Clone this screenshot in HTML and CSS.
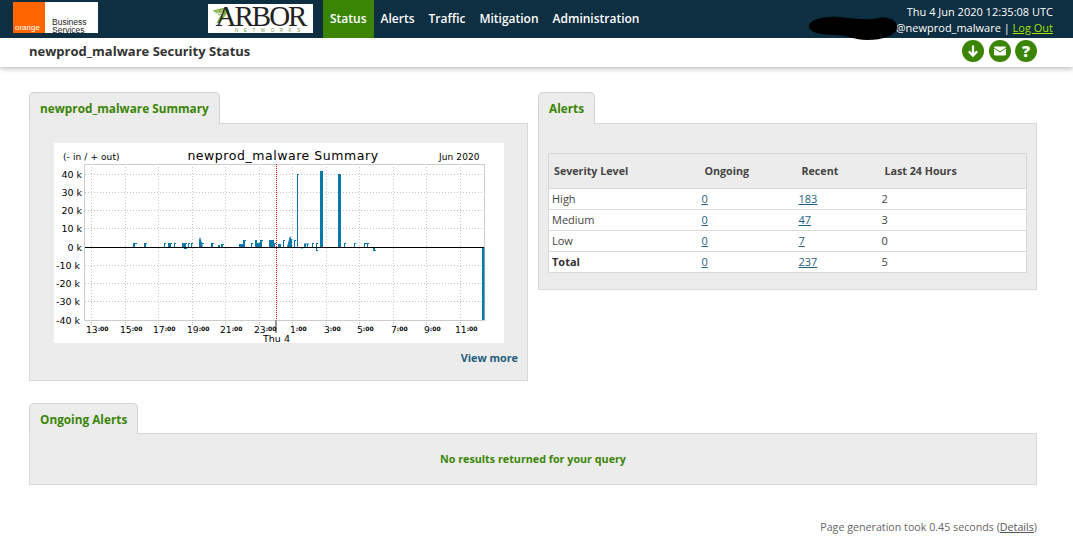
FILE: index.html
```html
<!DOCTYPE html>
<html lang="en">
<head>
<meta charset="utf-8">
<title>newprod_malware Security Status</title>
<link rel="stylesheet" href="styles.css">
</head>
<body>
<header class="topbar">
  <div class="logo-orange">
    <div class="orange-square"><span>orange</span></div>
    <div class="orange-text"><span>Business</span><span>Services</span></div>
  </div>
  <div class="logo-arbor">
    <svg class="arbor-leaf" viewBox="0 0 20 20" aria-hidden="true"><path d="M1 4 L12 1 L19 3 L9 18 L5 18 L9 10 Z" fill="#7fae45"/><path d="M3 7h9M6 4l4 6M11 3l1 7" stroke="#e8f0dc" stroke-width="1" fill="none"/></svg>
    <span class="arbor-word">ARBOR</span>
    <span class="arbor-sub">NETWORKS</span>
  </div>
  <nav class="mainnav">
    <a class="navitem active">Status</a>
    <a class="navitem">Alerts</a>
    <a class="navitem">Traffic</a>
    <a class="navitem">Mitigation</a>
    <a class="navitem">Administration</a>
  </nav>
  <div class="userinfo">
    <div>Thu 4 Jun 2020 12:35:08 UTC</div>
    <div>@newprod_malware | <a class="logout">Log Out</a></div>
    <svg class="redact" viewBox="0 0 90 26" aria-hidden="true"><path d="M0 10C3 4 15 1 30 2C45 3 55 6 70 3C80 1 90 6 88 14C86 20 75 25 58 25C45 25 40 20 25 20C10 20-3 16 0 10Z"/></svg>
  </div>
</header>
<div class="subbar">
  <h1 class="pagetitle">newprod_malware Security Status</h1>
  <div class="actions">
    <span class="action"><svg viewBox="0 0 22 22" aria-hidden="true"><path d="M11 5.500v10M6.800 11.400l4.200 4.200 4.200-4.200" fill="none" stroke="#fff" stroke-width="2.200"/></svg></span>
    <span class="action"><svg viewBox="0 0 22 22" aria-hidden="true"><rect x="5" y="6.500" width="12" height="9" rx="1" fill="#fff"/><path d="M5 8l6 4 6-4" fill="none" stroke="#3b8505" stroke-width="1"/></svg></span>
    <span class="action help">?</span>
  </div>
</div>
<main class="content">
  <div class="columns">
    <section class="panel">
      <h2 class="tab">newprod_malware Summary</h2>
      <div class="panelbody chartbody">
        <svg class="chart" viewBox="54 143 450 200" role="img" aria-label="Traffic summary chart">
          <rect x="54" y="143" width="450" height="200" fill="#fff"/>
          <g class="grid">
            <path d="M85 174.500H484M85 192.500H484M85 210.500H484M85 228.500H484M85 265.500H484M85 283.500H484M85 301.500H484"/>
            <path d="M91.500 164V320M125.500 164V320M158.500 164V320M192.500 164V320M225.500 164V320M259.500 164V320M292.500 164V320M326.500 164V320M359.500 164V320M393.500 164V320M426.500 164V320M460.500 164V320"/>
          </g>
          <path class="frame" d="M84.500 320.500V164.500H484.500V320.500H84.500"/>
          <path class="ticks" d="M91.500 320v5M125.500 320v5M158.500 320v5M192.500 320v5M225.500 320v5M259.500 320v5M292.500 320v5M326.500 320v5M359.500 320v5M393.500 320v5M426.500 320v5M460.500 320v5"/>
          <g class="bars">
            <path d="M133 247v-4h4v1h-2v3zM144 247v-4h3v1h-1v3zM164 247v-4h2v1h-1v3zM168 247v-4h4v1h-1v3zM174 247v-4h2v1h-1v3z"/>
            <path d="M182 247v-4h5v1h-1v3zM184 247h3v2h-3zM188 247v-4h2v1h-1v3zM191 247v-4h2v1h-1v3z"/>
            <path d="M199 247v-7l1-3 1 3 1 3h2v1h-1.500v3z"/>
            <path d="M211 247v-4h3v1h-1v3zM218 247v-2h2v2zM221 247v-3h3v1h-1v2z"/>
            <path d="M239 247v-3h4v-4h3v1h-1v6zM251 247v-4h2v1h-1v3z"/>
            <path d="M255 247v-7h2v3h3v-3h3v1h-1v6zM269 247v-7h5v3h2v1h-1v3z"/>
            <path d="M278 247v-3h3v3zM283 247v-7h2v1h-1v6zM287 247l1-4 2-7 2 4v7zM294 247v-7h2v1h-1v6z"/>
            <path d="M297 247V174h2v1h-1v72zM301 247h2v1.500h-2z"/>
            <path d="M304 247v-3.500h5v1h-1v2.500h-1v-2.500h-1v2.500zM312 247v-4h2v1h-1v3zM316 243h2v1h-1v6h1v1h-2z"/>
            <path d="M320 247V171h3v76zM338 247V174h3v73z"/>
            <path d="M344 247v-4h2v1h-1v3zM354 247v-4h2v1h-1v3zM364 247v-4h5v1h-1v3h-1v-3h-2v3zM373 247h2v3h1v1h-3z"/>
            <path d="M482 247h2.500v73h-2.500z"/>
          </g>
          <path class="zero" d="M85 247.500H484"/>
          <path class="marker" d="M276.500 164V320"/>
          <rect class="markertick" x="275" y="320" width="2" height="13"/>
          <text class="c-small" x="63" y="160">(- in / + out)</text>
          <text class="c-title" x="283" y="160" text-anchor="middle">newprod_malware Summary</text>
          <text class="c-small" x="439" y="160">Jun 2020</text>
          <g class="c-y" text-anchor="end">
            <text x="82" y="178">40 k</text>
            <text x="82" y="196">30 k</text>
            <text x="82" y="214">20 k</text>
            <text x="82" y="232">10 k</text>
            <text x="82" y="251">0 k</text>
            <text x="80" y="269">-10 k</text>
            <text x="80" y="287">-20 k</text>
            <text x="80" y="305">-30 k</text>
            <text x="80" y="324">-40 k</text>
          </g>
          <g class="c-x">
            <text x="86" y="333">13<tspan class="c-min" dy="-2">:00</tspan></text>
            <text x="120" y="333">15<tspan class="c-min" dy="-2">:00</tspan></text>
            <text x="153" y="333">17<tspan class="c-min" dy="-2">:00</tspan></text>
            <text x="187" y="333">19<tspan class="c-min" dy="-2">:00</tspan></text>
            <text x="220" y="333">21<tspan class="c-min" dy="-2">:00</tspan></text>
            <text x="254" y="333">23<tspan class="c-min" dy="-2">:00</tspan></text>
            <text x="290" y="333">1<tspan class="c-min" dy="-2">:00</tspan></text>
            <text x="324" y="333">3<tspan class="c-min" dy="-2">:00</tspan></text>
            <text x="357" y="333">5<tspan class="c-min" dy="-2">:00</tspan></text>
            <text x="391" y="333">7<tspan class="c-min" dy="-2">:00</tspan></text>
            <text x="424" y="333">9<tspan class="c-min" dy="-2">:00</tspan></text>
            <text x="455" y="333">11<tspan class="c-min" dy="-2">:00</tspan></text>
          </g>
          <text class="c-day" x="276.500" y="342" text-anchor="middle">Thu 4</text>
        </svg>
        <a class="viewmore">View more</a>
      </div>
    </section>
    <section class="panel">
      <h2 class="tab">Alerts</h2>
      <div class="panelbody alertsbody">
        <table class="alerts">
          <thead>
            <tr><th class="c1">Severity Level</th><th class="c2">Ongoing</th><th class="c3">Recent</th><th class="c4">Last 24 Hours</th></tr>
          </thead>
          <tbody>
            <tr><td>High</td><td><a>0</a></td><td><a>183</a></td><td>2</td></tr>
            <tr><td>Medium</td><td><a>0</a></td><td><a>47</a></td><td>3</td></tr>
            <tr><td>Low</td><td><a>0</a></td><td><a>7</a></td><td>0</td></tr>
            <tr><td class="total">Total</td><td><a>0</a></td><td><a>237</a></td><td>5</td></tr>
          </tbody>
        </table>
      </div>
    </section>
  </div>
  <section class="panel ongoing">
    <h2 class="tab">Ongoing Alerts</h2>
    <div class="panelbody noresults">No results returned for your query</div>
  </section>
  <footer class="pagefoot">Page generation took 0.45 seconds (<a>Details</a>)</footer>
</main>
</body>
</html>
```
FILE: styles.css
```css
* { box-sizing: border-box; }
html, body { margin: 0; padding: 0; }
body {
  font-family: "Open Sans", "Liberation Sans", sans-serif;
  font-size: 11px;
  color: #333;
  background: #fff;
  height: 538px;
  overflow: hidden;
}
a { color: #1f6280; text-decoration: underline; }

.topbar {
  display: flex;
  height: 38px;
  background: #0e2e42;
  color: #fff;
  padding-left: 13px;
  position: relative;
  z-index: 2;
}
.logo-orange {
  display: flex;
  width: 85px;
  height: 31px;
  margin-top: 2px;
  background: #fff;
  overflow: hidden;
}
.orange-square {
  width: 32px;
  background: #ff6600;
  display: flex;
  align-items: flex-end;
  padding: 0 0 1px 2px;
}
.orange-square span { font-size: 8px; line-height: 9px; color: #fff; font-family: "Liberation Sans", sans-serif; }
.orange-text {
  display: flex;
  flex-direction: column;
  padding: 17px 0 0 7px;
  font-family: "Liberation Sans", sans-serif;
  font-size: 8.5px;
  line-height: 7.5px;
  color: #222;
}
.logo-arbor {
  width: 105px;
  height: 29px;
  margin: 4px 0 0 110px;
  background: #fff;
  position: relative;
  text-align: center;
}
.arbor-word {
  display: block;
  position: relative;
  z-index: 1;
  font-family: "Liberation Serif", serif;
  font-size: 29px;
  line-height: 25px;
  letter-spacing: -2px;
  color: #222;
}
.arbor-sub {
  display: block;
  font-family: "Liberation Sans", sans-serif;
  font-size: 4.5px;
  line-height: 4px;
  letter-spacing: 5.6px;
  color: #6d9a3a;
  text-align: left;
  padding-left: 27px;
}
.arbor-leaf { position: absolute; left: 4px; top: 3px; width: 18px; height: 18px; }
.mainnav { display: flex; margin-left: 10px; }
.navitem {
  color: #fff;
  text-decoration: none;
  font-size: 12px;
  font-weight: 600;
  line-height: 37px;
  padding: 0 7px;
}
.navitem.active { background: #3b8505; }
.userinfo {
  margin-left: auto;
  margin-right: 20px;
  padding-top: 4px;
  text-align: right;
  font-size: 11px;
  line-height: 15.5px;
  position: relative;
}
.redact {
  position: absolute;
  left: -87px;
  top: 15px;
  width: 90px;
  height: 26px;
  display: block;
  fill: #000;
}
.logout { color: #a6e000; }

.subbar {
  display: flex;
  align-items: center;
  justify-content: space-between;
  height: 29px;
  padding: 0 36px 0 29px;
  background: #fff;
  box-shadow: 0 2px 5px rgba(0,0,0,.25);
  position: relative;
}
.pagetitle { margin: 0 0 4px; font-size: 13px; font-weight: 700; color: #333; }
.actions { display: flex; gap: 4.5px; margin-bottom: 3px; }
.action {
  width: 22px;
  height: 22px;
  border-radius: 50%;
  background: #3b8505;
  color: #fff;
  display: flex;
  align-items: center;
  justify-content: center;
}
.action svg { width: 22px; height: 22px; display: block; }
.help { font-size: 16px; font-weight: 800; line-height: 22px; }

.content { padding: 25px 36px 0 29px; }
.columns { display: flex; gap: 10px; align-items: flex-start; }
.panel { flex: 1 1 0; min-width: 0; display: flex; flex-direction: column; }
.tab {
  align-self: flex-start;
  height: 32px;
  margin: 0 0 -1px;
  padding: 0 10px;
  font-size: 11.8px;
  line-height: 31px;
  font-weight: 700;
  color: #3b8505;
  background: #ececec;
  border: 1px solid #d2d2d2;
  border-bottom: 0;
  border-radius: 5px 5px 0 0;
  position: relative;
  z-index: 1;
}
.panelbody { background: #ececec; border: 1px solid #d8d8d8; }
.chartbody { height: 258px; padding: 19px 0 0 24px; }
.chart { display: block; width: 450px; height: 200px; }
.grid path { fill: none; stroke: #c4c4c4; stroke-width: 1; stroke-dasharray: 1 2; }
.frame { fill: none; stroke: #ccc; stroke-width: 1; }
.ticks { fill: none; stroke: #bbb; stroke-width: 1; stroke-dasharray: 1 1; }
.bars path { fill: #0879a8; }
.zero { stroke: #000; stroke-width: 1.2; fill: none; }
.marker { stroke: #f00; stroke-width: 1; stroke-dasharray: 1 1; fill: none; }
.markertick { fill: #999; }
.chart text { font-family: "DejaVu Sans", sans-serif; fill: #000; }
.c-small { font-size: 9px; letter-spacing: .1px; }
.c-title { font-size: 12.5px; letter-spacing: .55px; }
.c-y text { font-size: 9.5px; }
.c-x text { font-size: 9.2px; }
.c-x .c-min { font-size: 6px; font-weight: 700; }
.c-day { font-size: 9.5px; }
.viewmore {
  display: block;
  margin: 7px 9px 0 0;
  text-align: right;
  font-size: 10.8px;
  font-weight: 700;
  text-decoration: none;
  color: #235f7c;
}
.alertsbody { height: 167px; padding: 29px 9px 0; }
.alerts {
  width: 100%;
  border-collapse: collapse;
  font-size: 11px;
  background: #fff;
  border: 1px solid #d8d8d8;
}
.alerts th {
  height: 35px;
  padding: 0 0 0 5px;
  text-align: left;
  font-size: 10.7px;
  font-weight: 700;
  color: #444;
  background: #ececec;
  border-bottom: 1px solid #d8d8d8;
}
.alerts td {
  height: 21px;
  padding: 0 0 2px 3px;
  border-bottom: 1px solid #d8d8d8;
  color: #444;
}
.alerts .c1 { width: 150px; }
.alerts .c2 { width: 97px; padding-left: 6px; }
.alerts .c3 { width: 83px; padding-left: 6px; }
.alerts .c4 { padding-left: 6px; }
.alerts .total { font-weight: 700; color: #333; }
.ongoing { margin-top: 22px; }
.ongoing .tab { height: 31px; line-height: 30px; }
.noresults {
  height: 52px;
  line-height: 50px;
  text-align: center;
  font-weight: 700;
  font-size: 10.75px;
  color: #3b8505;
}
.pagefoot {
  margin-top: 35px;
  text-align: right;
  font-size: 10.7px;
  line-height: 15px;
  color: #666;
}
.pagefoot a { color: #555; }
```
